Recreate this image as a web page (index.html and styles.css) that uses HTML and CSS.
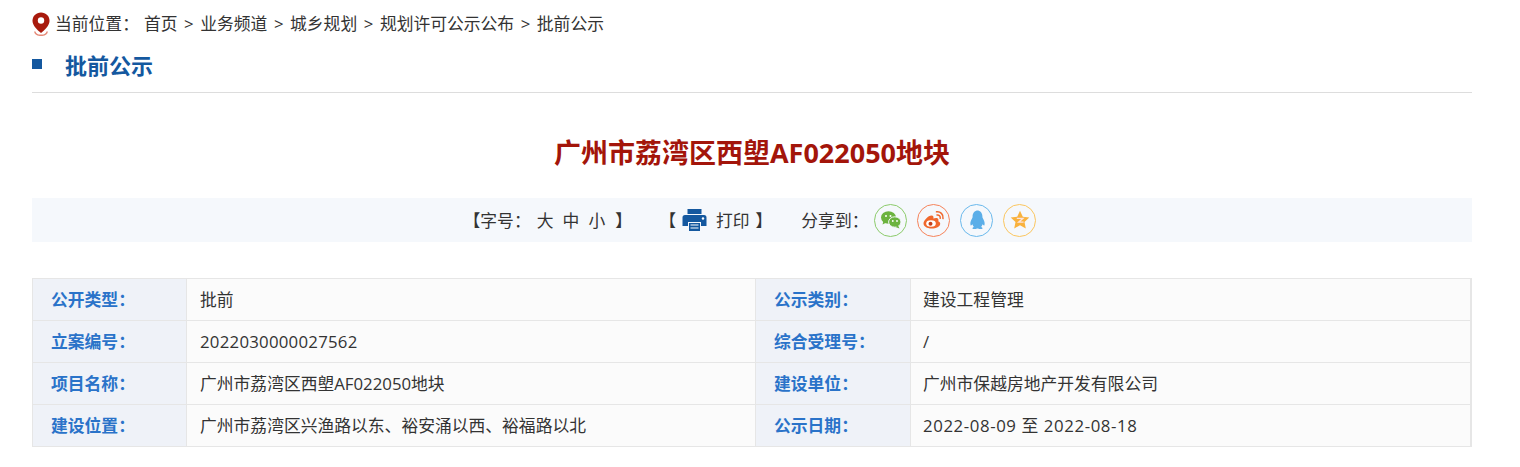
FILE: index.html
```html
<!DOCTYPE html>
<html lang="zh-CN">
<head>
    <meta charset="UTF-8">
    <title>批前公示</title>
    <link rel="stylesheet" href="styles.css">
</head>
<body>
    <div class="main">
        <div class="crumb">
            <svg class="pin" width="18" height="24" viewBox="0 0 18 24">
                <path d="M9 .5C4 .5.5 4.100.5 8.800c0 4.700 4.700 9.200 8.500 12.200 3.800-3 8.500-7.500 8.500-12.200C17.500 4.100 14 .5 9 .5z" fill="#a81a0d"/>
                <circle cx="9" cy="8.500" r="3.200" fill="#fff"/>
                <path d="M2.800 19.500c.3 2.600 2.700 3.800 6.200 3.800s5.900-1.200 6.200-3.800" fill="none" stroke="#e58a78" stroke-width="1.500"/>
            </svg>
            <span class="crumb-label">当前位置：</span>
            <span class="crumb-path">首页 &gt; 业务频道 &gt; 城乡规划 &gt; 规划许可公示公布 &gt; 批前公示</span>
        </div>

        <div class="section-head">
            <i class="square"></i>
            <h2>批前公示</h2>
        </div>

        <h1 class="title">广州市荔湾区西塱AF022050地块</h1>

        <div class="toolbar">
            <span class="tool">
                <span>【字号：</span>
                <span class="sizes">大 中 小</span>
                <span>】</span>
            </span>
            <span class="tool print">
                <span>【</span>
                <svg width="25" height="24" viewBox="0 0 25 24">
                    <path d="M5.500 1h14v5h-14z" fill="#14589f"/>
                    <path d="M3 7h19a2.500 2.500 0 0 1 2.500 2.500V18H19v-4H6v4H.5V9.500A2.500 2.500 0 0 1 3 7z" fill="#14589f"/>
                    <path d="M7 15h11v8H7z" fill="#14589f"/>
                    <path d="M8.500 17h8M8.500 20h8" stroke="#fff" stroke-width="1.200"/>
                    <circle cx="21" cy="10.500" r="1.200" fill="#fff"/>
                </svg>
                <span class="print-text">打印</span>
                <span>】</span>
            </span>
            <span class="share">
                <span class="share-label">分享到：</span>
                <span class="share-btn wechat">
                    <svg width="22" height="20" viewBox="0 0 22 20">
                        <ellipse cx="8.500" cy="7.500" rx="7.500" ry="6.200" fill="#6cb33f"/>
                        <path d="M3.500 11l-1 3.500 4-2z" fill="#6cb33f"/>
                        <ellipse cx="14.800" cy="12" rx="6.200" ry="5.200" fill="#6cb33f" stroke="#f5f8fc" stroke-width="1"/>
                        <path d="M18 15.500l1.500 3-4-1.500z" fill="#6cb33f"/>
                        <circle cx="6" cy="6" r="1" fill="#fff"/><circle cx="10.500" cy="6" r="1" fill="#fff"/>
                        <circle cx="12.800" cy="11" r=".9" fill="#fff"/><circle cx="17" cy="11" r=".9" fill="#fff"/>
                    </svg>
                </span>
                <span class="share-btn weibo">
                    <svg width="22" height="20" viewBox="0 0 22 20">
                        <path d="M8.500 18.500C4 18.500.5 16.300.5 13.500c0-3 4.700-8 8-8 2 0 2.300 1.600 1.800 3 2.500-1 5.200-.8 5.200 1.500 0 .5-.2.900-.3 1.200 1.400.4 2 1.300 2 2.500 0 2.800-3.900 4.800-8.700 4.800z" fill="#f0682d"/>
                        <ellipse cx="8" cy="13.500" rx="4.800" ry="3.300" fill="#fff"/>
                        <circle cx="7.500" cy="13.800" r="2" fill="#c8401a"/>
                        <path d="M13.500 1.800c3.800-.6 7.200 2.500 6.500 6.800M14 5c2-.3 3.600 1.300 3.200 3.300" fill="none" stroke="#f0682d" stroke-width="1.500" stroke-linecap="round"/>
                    </svg>
                </span>
                <span class="share-btn qq">
                    <svg width="20" height="20" viewBox="0 0 20 20">
                        <path d="M10 .5c3.600 0 5.400 2.700 5.400 6 0 .7 0 1 .3 1.500 1 1.800 2.500 4.500 1.800 7-.4 1-1.200.4-1.900-.7-.3 1.200-.9 2-1.500 2.600 1 .4 1.700.9 1.400 1.500-.4.900-2.900.9-4.500.2-.4-.1-.7-.1-1 0-1.600.7-4.100.7-4.500-.2-.3-.6.400-1.100 1.400-1.500-.6-.6-1.200-1.400-1.500-2.600-.7 1.100-1.500 1.700-1.900.7-.7-2.500.8-5.200 1.800-7 .3-.5.300-.8.300-1.500 0-3.300 1.800-6 5.400-6z" fill="#5baee8"/>
                    </svg>
                </span>
                <span class="share-btn qzone">
                    <svg width="20" height="20" viewBox="0 0 20 20">
                        <path d="M10 .8l2.800 6 6.500.8-4.800 4.400 1.300 6.500L10 15.200l-5.800 3.300 1.300-6.500L.7 7.600l6.500-.8z" fill="#f9b23d"/>
                        <path d="M6.800 8.300h6.200l-4.400 3.900h5" fill="none" stroke="#fbe3e0" stroke-width="1.300"/>
                    </svg>
                </span>
            </span>
        </div>

        <table class="info">
            <colgroup>
                <col class="col-label">
                <col class="col-left">
                <col class="col-label2">
                <col>
            </colgroup>
            <tr>
                <th>公开类型：</th><td>批前</td>
                <th>公示类别：</th><td class="right">建设工程管理</td>
            </tr>
            <tr>
                <th>立案编号：</th><td class="num">2022030000027562</td>
                <th>综合受理号：</th><td class="right">/</td>
            </tr>
            <tr>
                <th>项目名称：</th><td>广州市荔湾区西塱AF022050地块</td>
                <th>建设单位：</th><td class="right">广州市保越房地产开发有限公司</td>
            </tr>
            <tr>
                <th>建设位置：</th><td>广州市荔湾区兴渔路以东、裕安涌以西、裕福路以北</td>
                <th>公示日期：</th><td class="right date">2022-08-09 至 2022-08-18</td>
            </tr>
        </table>
    </div>
</body>
</html>
```

FILE: styles.css
```css
body {
    margin: 0;
    background: #fff;
    color: #333;
    font-family: "Open Sans", "Noto Sans CJK SC", sans-serif;
    font-size: 16.800px;
}
.main {
    width: 1440px;
    margin-left: 32px;
}
.crumb {
    display: flex;
    align-items: center;
    height: 24px;
    padding-top: 12px;
    line-height: 24px;
}
.pin {
    margin-right: 5px;
}
.crumb-label {
    margin-right: 5px;
}
.crumb-path {
    word-spacing: 2.200px;
}
.section-head {
    display: flex;
    align-items: center;
    height: 56px;
    border-bottom: 1px solid #ddd;
}
.square {
    width: 10px;
    height: 10px;
    margin-right: 23px;
    background: #14589f;
}
.section-head h2 {
    margin: 0;
    color: #14589f;
    font-size: 22px;
    font-weight: 700;
}
.title {
    margin: 0;
    padding-top: 42px;
    height: 36px;
    line-height: 36px;
    color: #a3150a;
    font-size: 27px;
    font-weight: 700;
    text-align: center;
}
.toolbar {
    display: flex;
    justify-content: center;
    align-items: center;
    height: 44px;
    margin-top: 27px;
    padding-right: 4px;
    background: #f5f8fc;
}
.tool {
    display: flex;
    align-items: center;
}
.sizes {
    margin: 0 10px 0 6px;
    word-spacing: 4.800px;
}
.print {
    margin-left: 27px;
}
.print svg {
    margin: 0 9px 0 6px;
}
.print-text {
    margin-right: 6px;
}
.share {
    display: flex;
    align-items: center;
    margin-left: 29px;
}
.share-label {
    margin-right: 6px;
}
.share-btn {
    display: flex;
    align-items: center;
    justify-content: center;
    width: 31px;
    height: 31px;
    margin-right: 10px;
    border: 1px solid;
    border-radius: 50%;
}
.share-btn:last-child {
    margin-right: 0;
}
.wechat { border-color: #8ccb6b; }
.weibo { border-color: #f5835a; }
.qq { border-color: #6ab9ec; }
.qzone { border-color: #fbc65f; }
.info {
    width: 1440px;
    margin-top: 36px;
    border-collapse: collapse;
    table-layout: fixed;
    border: 1px solid #e6e6e6;
    border-right-width: 2px;
}
.col-label {
    width: 154px;
}
.col-left {
    width: 569px;
}
.col-label2 {
    width: 155px;
}
.info th,
.info td {
    height: 41px;
    padding: 0;
    border: 1px solid #e6e6e6;
    line-height: 24px;
}
.info th {
    padding-left: 18px;
    background: #eff2f8;
    color: #2a73c9;
    font-weight: 700;
    text-align: left;
}
.info td {
    padding-left: 13px;
    background: #fbfbfb;
}
.info .right {
    padding-left: 12px;
}
.info .num {
    letter-spacing: .25px;
}
.info .date {
    letter-spacing: .6px;
}
```
